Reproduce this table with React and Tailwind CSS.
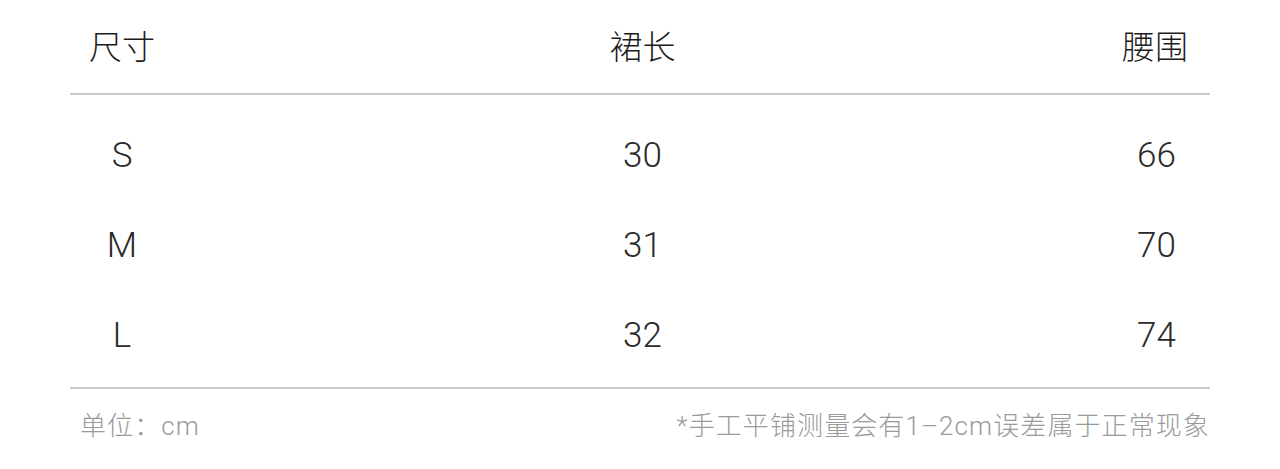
export default function App() {
  const rows = [
    ["S", "30", "66"],
    ["M", "31", "70"],
    ["L", "32", "74"],
  ];
  const cjk = { fontFamily: '"Liberation Sans", "Noto Sans CJK SC", sans-serif' };
  const num = { fontFamily: 'Roboto, "Noto Sans CJK SC", sans-serif' };
  return (
    <div className="w-[1280px] h-[469px] bg-white px-[70px] overflow-hidden" style={cjk}>
      <div className="grid grid-cols-[104px_1fr_110px] h-[93px] items-center pt-[3px] text-[33px] text-[#1c1c1c] font-light">
        <div className="text-center">尺寸</div>
        <div className="text-center pl-[11px]">裙长</div>
        <div className="text-center">腰围</div>
      </div>
      <div className="h-[2px] bg-[#c9c9c9]" />
      <div className="pt-[16px] pb-[6px]" style={num}>
        {rows.map((r) => (
          <div key={r[0]} className="grid grid-cols-[104px_1fr_110px] h-[90px] items-center text-[35px] text-[#2a2a2a] font-light">
            <div className="text-center">{r[0]}</div>
            <div className="text-center pl-[11px]">{r[1]}</div>
            <div className="text-center pl-[3px]">{r[2]}</div>
          </div>
        ))}
      </div>
      <div className="h-[2px] bg-[#c9c9c9]" />
      <div className="flex h-[74px] items-center justify-between text-[26px] text-[#9a9a9a] font-light tracking-[1.1px]" style={num}>
        <div className="pl-[10px]">单位：cm</div>
        <div>*手工平铺测量会有1–2cm误差属于正常现象</div>
      </div>
    </div>
  );
}
